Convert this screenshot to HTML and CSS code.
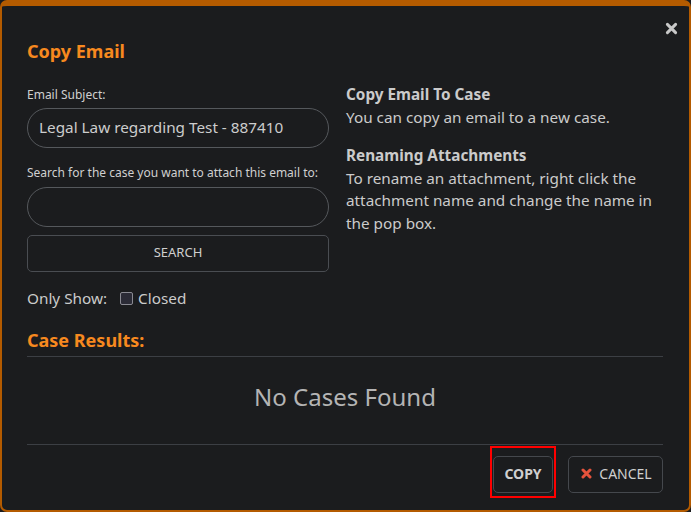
FILE: index.html
```html
<!DOCTYPE html>
<html>
<head>
<meta charset="utf-8">
<link rel="stylesheet" href="styles.css">
</head>
<body>
<div class="modal">
  <button class="close" aria-label="Close">
    <svg width="13" height="13" viewBox="0 0 13 13"><path d="M2.4 2.4 L10.6 10.6 M10.6 2.4 L2.4 10.6" stroke="#c8c8c8" stroke-width="3" stroke-linecap="round"/></svg>
  </button>
  <h1 class="title">Copy Email</h1>
  <div class="cols">
    <div class="left">
      <label class="lbl">Email Subject:</label>
      <div class="field">Legal Law regarding Test - 887410</div>
      <label class="lbl lbl2">Search for the case you want to attach this email to:</label>
      <div class="field"></div>
      <button class="search">SEARCH</button>
      <div class="only">
        <span>Only Show:</span>
        <span class="check"></span>
        <span>Closed</span>
      </div>
    </div>
    <div class="right">
      <h3 class="sub">Copy Email To Case</h3>
      <p class="txt">You can copy an email to a new case.</p>
      <h3 class="sub sub2">Renaming Attachments</h3>
      <p class="txt">To rename an attachment, right click the attachment name and change the name in the pop box.</p>
    </div>
  </div>
  <h2 class="results">Case Results:</h2>
  <div class="none">No Cases Found</div>
  <div class="footer">
    <div class="copywrap">
      <button class="btn copy">COPY</button>
      <span class="focus"></span>
    </div>
    <button class="btn cancel">
      <svg width="11" height="11" viewBox="0 0 11 11"><path d="M2 2 L9 9 M9 2 L2 9" stroke="#e5533c" stroke-width="3" stroke-linecap="round"/></svg>
      CANCEL
    </button>
  </div>
</div>
</body>
</html>
```
FILE: styles.css
```css
html, body {
  margin: 0;
  padding: 0;
  background: #1b1c1e;
}
body {
  font-family: "Noto Sans", "Open Sans", sans-serif;
  color: #cbcbcb;
}
.modal {
  position: relative;
  box-sizing: border-box;
  width: 691px;
  height: 512px;
  background: #1b1c1e;
  border: 2px solid #b45b00;
  border-top-width: 6px;
  border-radius: 7px;
  padding: 33px 26px 0 25px;
}
.close {
  position: absolute;
  top: 16px;
  right: 11px;
  background: none;
  border: 0;
  padding: 0;
  width: 13px;
  height: 13px;
  display: flex;
}
.title {
  margin: 0;
  font-size: 18px;
  line-height: 24px;
  font-weight: 700;
  color: #f7891f;
}
.cols {
  display: grid;
  grid-template-columns: 302px 1fr;
  column-gap: 17px;
  margin-top: 20px;
}
.left {
  padding-top: 4px;
  display: flex;
  flex-direction: column;
}
.lbl {
  font-size: 12px;
  line-height: 16px;
  color: #d0d0d0;
  margin-bottom: 5px;
}
.lbl2 {
  margin-top: 17px;
  margin-bottom: 6px;
}
.field {
  box-sizing: border-box;
  height: 40px;
  border: 1px solid #55585c;
  border-radius: 20px;
  padding: 0 11px;
  font-size: 15.3px;
  line-height: 37px;
  color: #cdcdcd;
}
.search {
  margin-top: 8px;
  height: 37px;
  background: #1b1c1e;
  border: 1px solid #4a4d52;
  border-radius: 5px;
  font-family: inherit;
  font-size: 13px;
  line-height: 33px;
  color: #cfcfcf;
  padding: 0 0 2px;
}
.only {
  margin-top: 15px;
  display: flex;
  align-items: center;
  font-size: 15.3px;
  line-height: 22.5px;
  color: #cbcbcb;
}
.check {
  box-sizing: border-box;
  width: 13px;
  height: 13px;
  margin: 1px 5px 0 13px;
  background: #2b2b36;
  border: 1px solid #8a8a92;
  border-radius: 2px;
}
.right {
  font-size: 15.3px;
  line-height: 22.5px;
}
.sub {
  margin: 0;
  font-size: 15.3px;
  font-weight: 700;
  color: #cbcbcb;
}
.sub2 {
  margin-top: 16px;
}
.txt {
  margin: 0;
  color: #cbcbcb;
}
.results {
  margin: 18px 0 0;
  font-size: 18px;
  line-height: 24px;
  font-weight: 700;
  color: #f7891f;
  padding-bottom: 4px;
  border-bottom: 1px solid #3c3f44;
}
.none {
  margin-top: 24px;
  text-align: center;
  font-size: 24px;
  line-height: 32px;
  color: #b4b4b4;
  padding-bottom: 31px;
  border-bottom: 1px solid #3c3f44;
}
.footer {
  display: flex;
  justify-content: flex-end;
  gap: 15px;
  margin-top: 11px;
}
.copywrap {
  position: relative;
  display: flex;
}
.btn {
  box-sizing: border-box;
  height: 37px;
  background: #1b1c1e;
  border: 1px solid #45484d;
  border-radius: 5px;
  font-family: inherit;
  font-size: 14px;
  color: #cfcfcf;
  display: flex;
  align-items: center;
  justify-content: center;
  padding-bottom: 2px;
}
.copy {
  width: 60px;
  font-weight: 700;
  padding-left: 0;
  padding-right: 0;
}
.cancel {
  width: 95px;
  gap: 7px;
  padding-left: 2px;
  padding-right: 0;
}
.focus {
  position: absolute;
  left: -3px;
  right: -3px;
  top: -10px;
  bottom: -5px;
  border: 2px solid #ff0000;
  pointer-events: none;
}
```
